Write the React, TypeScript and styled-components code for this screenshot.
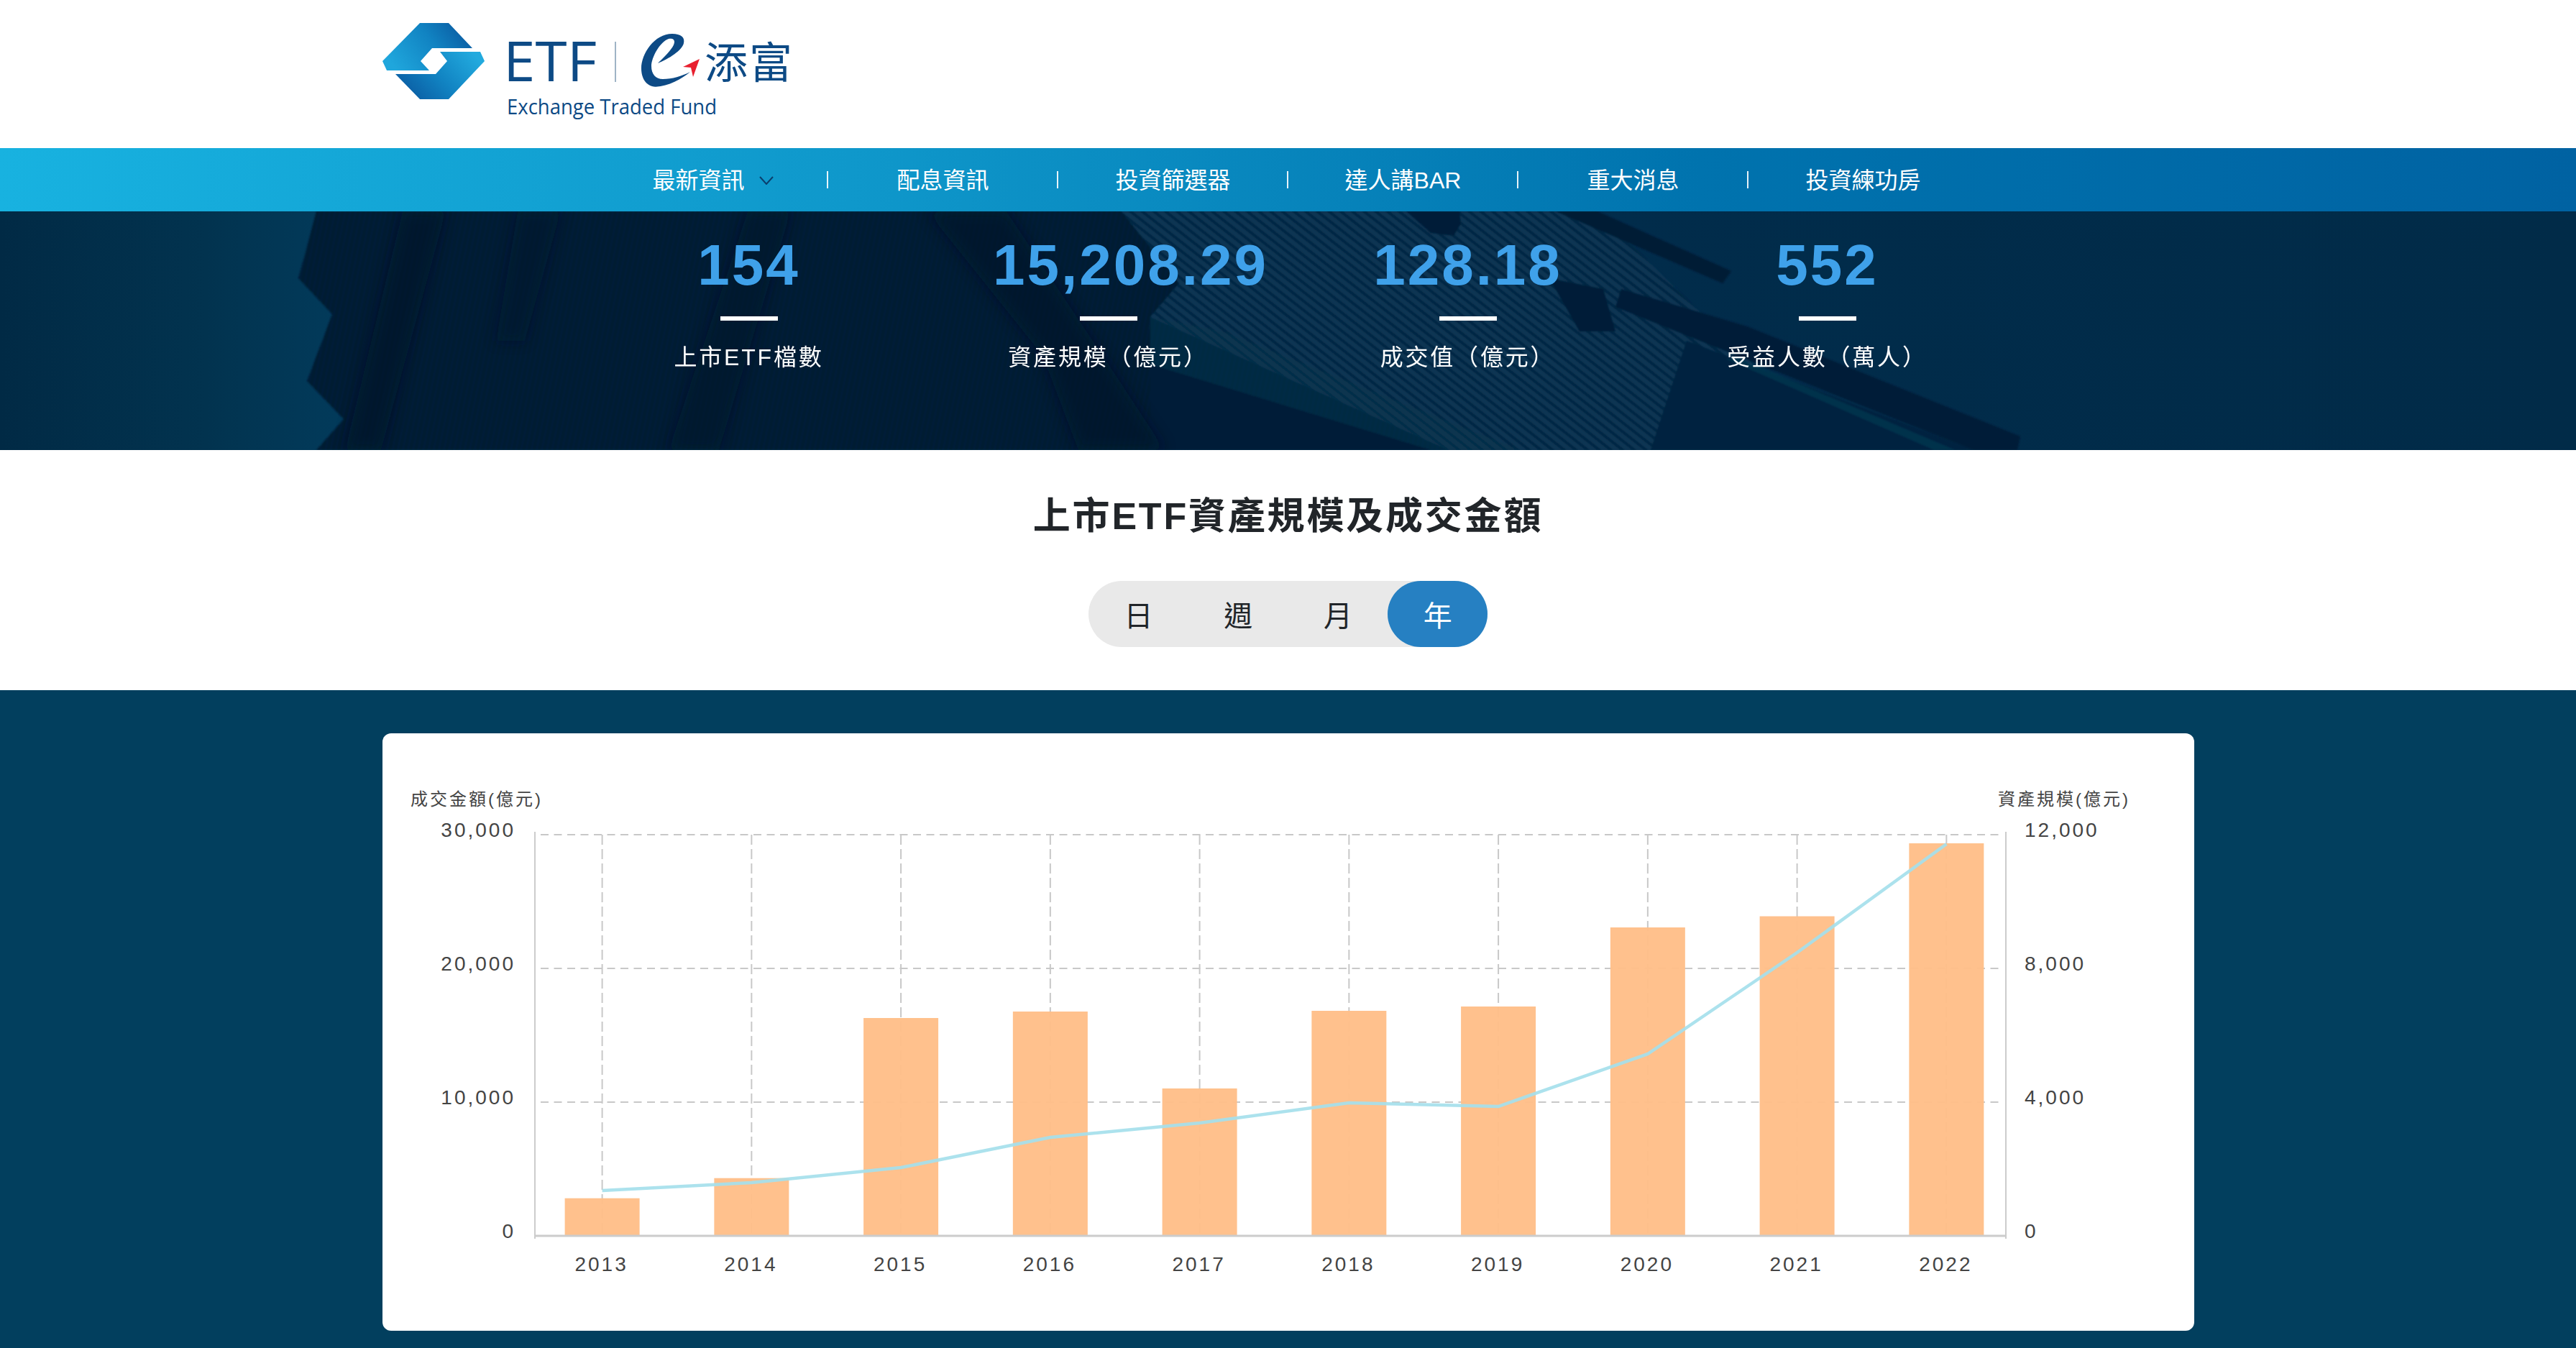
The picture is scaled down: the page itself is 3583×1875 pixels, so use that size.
import styled, { createGlobalStyle } from "styled-components";

const SANS = `"Liberation Sans", "Noto Sans CJK TC", sans-serif`;

const GlobalStyle = createGlobalStyle`
    html, body {
        margin: 0;
        padding: 0;
        background: #fff;
        font-family: ${SANS};
    }
`;

const Header = styled.header`
    height: 206px;
    box-sizing: border-box;
    padding: 30px 0 0 532px;
    background: #fff;
`;

const Nav = styled.nav`
    height: 88px;
    display: flex;
    justify-content: center;
    align-items: center;
    background: linear-gradient(90deg, #18b2e0 0%, #0f98cb 33%, #0073ae 66%, #0062a2 100%);
`;

const NavItem = styled.a<{ $last?: boolean }>`
    width: 320px;
    height: 24px;
    display: flex;
    justify-content: center;
    align-items: center;
    gap: 20px;
    box-sizing: border-box;
    padding: 0 0 4px ${(props) => (props.$last ? "0" : "2px")};
    border-right: ${(props) => (props.$last ? "0" : "2px solid rgba(255, 255, 255, 0.9)")};
    color: #fff;
    font-size: 32px;
    white-space: nowrap;
`;

const Chevron = styled.svg`
    margin-top: 6px;
`;

const Hero = styled.section`
    position: relative;
    height: 332px;
    overflow: hidden;
    background: linear-gradient(90deg, #012a45 0%, #02334f 8%, #023a5a 13%, #012c4b 60%, #012b48 100%);
`;

const HeroArt = styled.svg`
    position: absolute;
    inset: 0;
    width: 100%;
    height: 100%;
`;

const Stats = styled.div`
    position: relative;
    width: 2000px;
    margin: 0 auto;
    padding-top: 29px;
    display: grid;
    grid-template-columns: repeat(4, 500px);
`;

const Stat = styled.div`
    display: flex;
    flex-direction: column;
    align-items: center;
`;

const StatValue = styled.div<{ $nudge?: number }>`
    margin-left: ${(props) => props.$nudge || 0}px;
    color: #3fa1ea;
    font-size: 80px;
    font-weight: 700;
    line-height: 92px;
    letter-spacing: 3px;
    white-space: nowrap;
`;

const StatBar = styled.div`
    width: 80px;
    height: 6px;
    margin-top: 25px;
    background: #fff;
`;

const StatLabel = styled.div`
    margin-top: 29px;
    color: #fff;
    font-size: 32px;
    line-height: 44px;
    letter-spacing: 2.8px;
    white-space: nowrap;
`;

const Summary = styled.section`
    height: 334px;
    box-sizing: border-box;
    padding-top: 56px;
    display: flex;
    flex-direction: column;
    align-items: center;
    background: #fff;
`;

const Title = styled.h2`
    margin: 0;
    color: #212529;
    font-size: 52px;
    font-weight: 700;
    line-height: 72px;
    letter-spacing: 2.8px;
`;

const Range = styled.div`
    margin-top: 54px;
    width: 555px;
    height: 92px;
    display: grid;
    grid-template-columns: repeat(4, 1fr);
    border-radius: 46px;
    background: #e9e9e9;
`;

const RangeButton = styled.div<{ $active?: boolean }>`
    display: flex;
    justify-content: center;
    align-items: center;
    border-radius: 46px;
    background: ${(props) => (props.$active ? "#2680c2" : "transparent")};
    color: ${(props) => (props.$active ? "#fff" : "#212529")};
    font-size: 40px;
`;

const ChartSection = styled.section`
    height: 915px;
    box-sizing: border-box;
    padding-top: 60px;
    background: #023f5e;
`;

const ChartCard = styled.div`
    width: 2520px;
    height: 831px;
    margin: 0 auto;
    border-radius: 12px;
    background: #fff;
    overflow: hidden;
`;

const ChartSvg = styled.svg`
    display: block;
    font-family: ${SANS};
`;

const AxisText = styled.text`
    fill: #444;
    font-size: 28px;
    letter-spacing: 3px;
`;

const AxisTitle = styled.text`
    fill: #444;
    font-size: 24px;
    letter-spacing: 3px;
`;

const navItems = ["配息資訊", "投資篩選器", "達人講BAR", "重大消息", "投資練功房"];

const stats = [
    { value: "154", label: "上市ETF檔數" },
    { value: "15,208.29", label: "資產規模（億元）", nudge: 62 },
    { value: "128.18", label: "成交值（億元）" },
    { value: "552", label: "受益人數（萬人）" },
];

const ranges = ["日", "週", "月", "年"];

const years = [
    { year: 2013, turnover: 2812, assets: 1355 },
    { year: 2014, turnover: 4317, assets: 1591 },
    { year: 2015, turnover: 16290, assets: 2043 },
    { year: 2016, turnover: 16774, assets: 2946 },
    { year: 2017, turnover: 11022, assets: 3376 },
    { year: 2018, turnover: 16828, assets: 3978 },
    { year: 2019, turnover: 17150, assets: 3871 },
    { year: 2020, turnover: 23065, assets: 5441 },
    { year: 2021, turnover: 23898, assets: 8473 },
    { year: 2022, turnover: 29355, assets: 11720 },
];

const BASE_Y = 1718;
const PLOT_H = 558;
const yearX = (i: number) => 837.6 + i * 207.75;

function Logo() {
    return (
        <svg width="580" height="150" viewBox="532 30 580 150">
            <defs>
                <linearGradient id="markTop" x1="0" y1="0.6" x2="1" y2="0.2">
                    <stop offset="0" stopColor="#1fa6dc" />
                    <stop offset="0.55" stopColor="#1183c2" />
                    <stop offset="1" stopColor="#0a589f" />
                </linearGradient>
                <linearGradient id="markBottom" x1="0" y1="0.8" x2="1" y2="0.3">
                    <stop offset="0" stopColor="#0a589f" />
                    <stop offset="0.5" stopColor="#1183c2" />
                    <stop offset="1" stopColor="#22aade" />
                </linearGradient>
            </defs>
            <path d="M584 32H624L657 67H601L585 85L597 98H538L532 85Z" fill="url(#markTop)" />
            <path d="M674 85L624 138H584L550 103H606L622 85L612 72H668Z" fill="url(#markBottom)" />
            <text x="700" y="113" fontFamily="'Open Sans', sans-serif" fontSize="76" fontWeight="500" fill="#0d4a85" textLength="130" lengthAdjust="spacingAndGlyphs">
                ETF
            </text>
            <rect x="855" y="58" width="2" height="56" fill="#9fb4c6" />
            <path
                d="M960 100C948 110 930 120 912 120.7C898 120 892 108 892 95C892 75 910 47 935 47C947 47 953 52 951 60C949 70 930 82 915 88C925 78 938 66 938 58C938 54 934 53 930 54C918 58 906 80 906 92C906 103 912 110 922 110C935 110 948 106 960 100Z"
                fill="#0d4a85"
            />
            <polygon points="973,82 950,93 961,94 964,107" fill="#e8202f" />
            <text x="980" y="109" fontFamily="'Noto Sans CJK TC', sans-serif" fontSize="60" fontWeight="400" letterSpacing="2" fill="#0d4a85">
                添富
            </text>
            <text x="705" y="159" fontFamily="'Open Sans', sans-serif" fontSize="29" fontWeight="500" fill="#0d4a85" textLength="292" lengthAdjust="spacingAndGlyphs">
                Exchange Traded Fund
            </text>
        </svg>
    );
}

function BuildingArt() {
    return (
        <HeroArt viewBox="0 0 3583 332" preserveAspectRatio="none">
            <defs>
                <pattern id="facade" width="10" height="10" patternUnits="userSpaceOnUse" patternTransform="rotate(38)">
                    <rect width="10" height="10" fill="#0b3553" />
                    <rect width="10" height="4" fill="#042843" />
                </pattern>
                <pattern id="fins" width="7" height="7" patternUnits="userSpaceOnUse" patternTransform="rotate(12)">
                    <rect width="7" height="7" fill="#011a33" />
                    <rect width="2" height="7" fill="#01203b" />
                </pattern>
                <filter id="soft" x="-5%" y="-5%" width="110%" height="110%">
                    <feGaussianBlur stdDeviation="1" />
                </filter>
                <filter id="softer" x="-20%" y="-20%" width="140%" height="140%">
                    <feGaussianBlur stdDeviation="9" />
                </filter>
            </defs>
            <g filter="url(#soft)">
                <polygon points="440,0 415,93 462,143 427,236 478,289 440,332 2015,332 1600,147 1640,100 1560,0" fill="url(#fins)" />
                <polygon points="1560,0 2222,0 2560,332 2015,332 1600,147 1640,100" fill="url(#facade)" />
                <polygon points="1600,213 1990,332 1600,332" fill="#021d37" />
                <polygon points="1600,147 1700,167 2114,332 1990,332 1600,213" fill="#08344f" opacity="0.6" />
                <polygon points="1956,0 2030,0 2032,17 2022,34 1990,30" fill="#011e38" />
                <polygon points="2164,0 2222,0 2408,83 2396,100" fill="#011c36" />
                <polygon points="2155,93 2230,108 2247,167 2197,167" fill="#011e38" />
                <polygon points="2255,108 2430,160 2810,313 2806,332 2745,332 2247,133" fill="#011d38" />
                <polygon points="2346,180 2745,332 2296,332" fill="#01243f" />
                <polygon points="2400,205 2420,205 2720,332 2690,332" fill="#04405a" opacity="0.5" />
            </g>
            <g filter="url(#softer)">
                <polygon points="560,0 620,0 530,332 480,332" fill="#00122a" opacity="0.55" />
                <polygon points="720,0 780,0 730,180 690,180" fill="#00132a" opacity="0.45" />
                <polygon points="1040,0 1100,0 1000,332 930,332" fill="#00112a" opacity="0.5" />
                <polygon points="1290,0 1400,0 1540,210 1620,332 1500,332 1450,200" fill="#00122b" opacity="0.55" />
            </g>
        </HeroArt>
    );
}

function TurnoverChart() {
    const ticks = [0, 1, 2, 3];
    const leftLabels = ["0", "10,000", "20,000", "30,000"];
    const rightLabels = ["0", "4,000", "8,000", "12,000"];
    const linePoints = years
        .map((d, i) => `${yearX(i)},${BASE_Y - (d.assets / 12000) * PLOT_H}`)
        .join(" ");

    return (
        <ChartSvg width="2520" height="831" viewBox="532 1019 2520 831">
            {ticks.slice(1).map((t) => (
                <line key={t} x1="752" x2="2786" y1={BASE_Y - t * 186} y2={BASE_Y - t * 186} stroke="#c8c8c8" strokeWidth="2" strokeDasharray="11 7.5" />
            ))}
            {years.map((d, i) => (
                <line key={d.year} x1={yearX(i)} x2={yearX(i)} y1="1160" y2={BASE_Y} stroke="#c8c8c8" strokeWidth="2" strokeDasharray="14 6" />
            ))}
            <line x1="744" x2="744" y1="1156" y2="1722" stroke="#ccc" strokeWidth="2" />
            <line x1="2790" x2="2790" y1="1156" y2="1722" stroke="#ccc" strokeWidth="2" />
            {years.map((d, i) => {
                const h = (d.turnover / 30000) * PLOT_H;
                return <rect key={d.year} x={yearX(i) - 52} y={BASE_Y - h} width="104" height={h} fill="#ffbe88" opacity="0.96" />;
            })}
            <line x1="744" x2="2790" y1={BASE_Y} y2={BASE_Y} stroke="#ccc" strokeWidth="3" />
            <polyline points={linePoints} fill="none" stroke="#a5e0ec" strokeWidth="4.5" opacity="0.92" />
            {ticks.map((t) => (
                <AxisText key={t} x="717" y={BASE_Y - t * 186 + 3} textAnchor="end">
                    {leftLabels[t]}
                </AxisText>
            ))}
            {ticks.map((t) => (
                <AxisText key={t} x="2816" y={BASE_Y - t * 186 + 3}>
                    {rightLabels[t]}
                </AxisText>
            ))}
            {years.map((d, i) => (
                <AxisText key={d.year} x={yearX(i) - 1} y="1767" textAnchor="middle">
                    {d.year}
                </AxisText>
            ))}
            <AxisTitle x="571" y="1119">成交金額(億元)</AxisTitle>
            <AxisTitle x="2779" y="1119">資產規模(億元)</AxisTitle>
        </ChartSvg>
    );
}

function App() {
    return (
        <>
            <GlobalStyle />
            <Header>
                <Logo />
            </Header>
            <Nav>
                <NavItem>
                    最新資訊
                    <Chevron width="20" height="12" viewBox="0 0 20 12">
                        <path d="M1 1L10 11L19 1" fill="none" stroke="#0b3f6d" strokeWidth="2" />
                    </Chevron>
                </NavItem>
                {navItems.map((item, i) => (
                    <NavItem key={item} $last={i === navItems.length - 1}>
                        {item}
                    </NavItem>
                ))}
            </Nav>
            <Hero>
                <BuildingArt />
                <Stats>
                    {stats.map((s) => (
                        <Stat key={s.label}>
                            <StatValue $nudge={s.nudge}>{s.value}</StatValue>
                            <StatBar />
                            <StatLabel>{s.label}</StatLabel>
                        </Stat>
                    ))}
                </Stats>
            </Hero>
            <Summary>
                <Title>上市ETF資產規模及成交金額</Title>
                <Range>
                    {ranges.map((r) => (
                        <RangeButton key={r} $active={r === "年"}>
                            {r}
                        </RangeButton>
                    ))}
                </Range>
            </Summary>
            <ChartSection>
                <ChartCard>
                    <TurnoverChart />
                </ChartCard>
            </ChartSection>
        </>
    );
}

export default App;
